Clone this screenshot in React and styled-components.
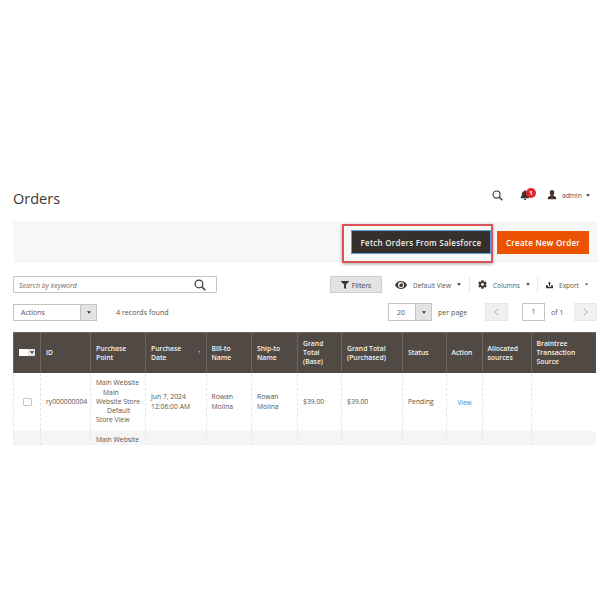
import React from "react";
import styled, { createGlobalStyle } from "styled-components";
import { FaCog, FaEye, FaBell, FaFilter } from "react-icons/fa";

const Global = createGlobalStyle`
  html, body {
    margin: 0;
    padding: 0;
    background: #fff;
    font-family: "Open Sans", sans-serif;
    color: #41362f;
  }
  * { box-sizing: border-box; }
`;

const columns = [
  { w: 27 },
  { w: 50, label: "ID" },
  { w: 55, label: "Purchase Point" },
  { w: 60.5, label: "Purchase Date", sort: true },
  { w: 45.5, label: "Bill-to Name" },
  { w: 46, label: "Ship-to Name" },
  { w: 44, label: "Grand Total (Base)" },
  { w: 61, label: "Grand Total (Purchased)" },
  { w: 43.5, label: "Status" },
  { w: 36, label: "Action" },
  { w: 49, label: "Allocated sources" },
  { w: 65.5, label: "Braintree Transaction Source" },
];

const Caret = () => (
  <svg width="4" height="3" viewBox="0 0 6 4">
    <path d="M0 0h6L3 4z" fill="#41362f" />
  </svg>
);

const SearchIcon = ({ size = 13 }) => (
  <svg width={size} height={size} viewBox="0 0 14 14" fill="none" stroke="#41362f">
    <circle cx="5.8" cy="5.8" r="4.5" strokeWidth="1.4" />
    <path d="M9.2 9.2l4 4" strokeWidth="1.800" />
  </svg>
);

const App = () => (
  <>
    <Global />
    <Page>
      <Header>
        <Title>Orders</Title>
        <HeaderTools>
          <SearchIcon size={11} />
          <Bell>
            <FaBell size={10} color="#41362f" />
            <Badge>1</Badge>
          </Bell>
          <AdminUser>
            <svg width="10" height="10" viewBox="0 0 12 12">
              <path d="M6 0c1.700 0 2.700 1.200 2.700 3S7.800 6 7.300 7c1.500.5 3.700 1.200 3.700 2.500V11H1V9.500C1 8.200 3.200 7.500 4.700 7 4.200 6 3.300 4.800 3.300 3S4.300 0 6 0z" fill="#41362f" />
            </svg>
            <span>admin</span>
            <Caret />
          </AdminUser>
        </HeaderTools>
      </Header>

      <ActionBar>
        <FetchWrap>
          <FetchButton>Fetch Orders From Salesforce</FetchButton>
        </FetchWrap>
        <CreateButton>Create New Order</CreateButton>
      </ActionBar>

      <ToolRow>
        <SearchBox>
          <em>Search by keyword</em>
          <SearchIcon size={12} />
        </SearchBox>
        <ToolGroup>
          <FilterButton>
            <FaFilter size={8} color="#41362f" />
            Filters
          </FilterButton>
          <ToolItem $w={74}>
            <FaEye size={12} color="#41362f" />
            <span>Default View</span>
            <Caret />
          </ToolItem>
          <ToolItem $w={68} $divided>
            <FaCog size={9} color="#41362f" />
            <span>Columns</span>
            <Caret />
          </ToolItem>
          <ToolItem $w={51} $divided>
            <svg width="9" height="8" viewBox="0 0 10 9">
              <path d="M5 0l2.500 2.500H5.800V6H4.200V2.500H2.500zM0 5h2.800v2h4.400V5H10v4H0z" fill="#41362f" />
            </svg>
            <span>Export</span>
            <Caret />
          </ToolItem>
        </ToolGroup>
      </ToolRow>

      <PagerRow>
        <LeftPager>
          <ActionsSelect>
            <span>Actions</span>
            <SelectArrow><Caret /></SelectArrow>
          </ActionsSelect>
          <Records>4 records found</Records>
        </LeftPager>
        <RightPager>
          <PerPageSelect>
            <span>20</span>
            <SelectArrow><Caret /></SelectArrow>
          </PerPageSelect>
          <PerPage>per page</PerPage>
          <PageArrow>
            <svg width="5" height="8" viewBox="0 0 6 9" fill="none" stroke="#adadad" strokeWidth="1.200">
              <path d="M5 .5L1 4.500l4 4" />
            </svg>
          </PageArrow>
          <PageInput>1</PageInput>
          <OfPages>of 1</OfPages>
          <PageArrow>
            <svg width="5" height="8" viewBox="0 0 6 9" fill="none" stroke="#adadad" strokeWidth="1.200">
              <path d="M1 .5l4 4-4 4" />
            </svg>
          </PageArrow>
        </RightPager>
      </PagerRow>

      <TableClip>
        <Table>
          <colgroup>
            {columns.map((c, i) => (
              <col key={i} style={{ width: c.w }} />
            ))}
          </colgroup>
          <thead>
            <tr>
              {columns.map((c, i) => (
                <Th key={i} $sort={c.sort}>
                  {i === 0 ? (
                    <HeadCheck>
                      <i />
                      <b><Caret /></b>
                    </HeadCheck>
                  ) : (
                    c.label
                  )}
                  {c.sort && <SortMark>↑</SortMark>}
                </Th>
              ))}
            </tr>
          </thead>
          <tbody>
            <FirstRow>
              <Td $center><CheckBox /></Td>
              <Td>ry000000004</Td>
              <Td>
                <StoreLine>Main Website</StoreLine>
                <StoreLine $indent={7}>Main</StoreLine>
                <StoreLine>Website Store</StoreLine>
                <StoreLine $indent={11}>Default</StoreLine>
                <StoreLine>Store View</StoreLine>
              </Td>
              <Td>Jun 7, 2024 12:06:00 AM</Td>
              <Td>Rowan Molina</Td>
              <Td>Rowan Molina</Td>
              <Td>$39.00</Td>
              <Td>$39.00</Td>
              <Td>Pending</Td>
              <Td $center><ViewLink>View</ViewLink></Td>
              <Td />
              <Td />
            </FirstRow>
            <OddRow>
              <Td />
              <Td />
              <Td><StoreLine>Main Website</StoreLine></Td>
              <Td />
              <Td />
              <Td />
              <Td />
              <Td />
              <Td />
              <Td />
              <Td />
              <Td />
            </OddRow>
          </tbody>
        </Table>
      </TableClip>
    </Page>
  </>
);

export default App;

const Page = styled.div`
  width: 600px;
  height: 600px;
  padding: 187px 3px 0 13px;
  overflow: hidden;
`;

const Header = styled.div`
  display: flex;
  justify-content: space-between;
  align-items: center;
  height: 24px;
  padding-right: 7px;
`;

const Title = styled.h1`
  margin: 0;
  font-size: 14.500px;
  font-weight: 400;
  line-height: 24px;
  color: #41362f;
`;

const HeaderTools = styled.div`
  display: flex;
  align-items: center;
  margin-top: -8px;
`;

const Bell = styled.div`
  position: relative;
  display: flex;
  margin-left: 17px;
  margin-right: 17px;
`;

const Badge = styled.span`
  position: absolute;
  top: -2px;
  left: 6px;
  width: 10px;
  height: 10px;
  border-radius: 50%;
  background: #e22626;
  color: #fff;
  font-size: 6px;
  font-weight: 700;
  line-height: 10px;
  text-align: center;
`;

const AdminUser = styled.div`
  display: flex;
  align-items: center;
  font-size: 6.800px;
  color: #5c534d;

  span {
    margin: 0 4px 0 5px;
  }
`;

const ActionBar = styled.div`
  display: flex;
  justify-content: flex-end;
  align-items: center;
  gap: 6px;
  height: 40px;
  margin-top: 11px;
  padding-right: 8px;
  background: #f8f8f8;
  border-top: 1px solid #f2f2f2;
  border-bottom: 1px solid #f2f2f2;
`;

const FetchWrap = styled.div`
  position: relative;

  &::after {
    content: "";
    position: absolute;
    top: -6px;
    right: -2px;
    bottom: -9px;
    left: -9px;
    border: 2px solid #d9535c;
    box-shadow: 0 1px 3px rgba(0, 0, 0, 0.35);
    pointer-events: none;
  }
`;

const FetchButton = styled.button`
  display: block;
  width: 140px;
  height: 24px;
  padding: 0;
  border: 1px solid #5d9fd6;
  background: #35302e;
  color: #f1ece8;
  font-family: inherit;
  font-size: 8px;
  font-weight: 600;
  letter-spacing: 0.25px;
`;

const CreateButton = styled.button`
  width: 92px;
  height: 23px;
  padding: 0;
  border: 0;
  background: #eb5202;
  color: #fff;
  font-family: inherit;
  font-size: 8px;
  font-weight: 600;
  letter-spacing: 0.25px;
`;

const ToolRow = styled.div`
  display: flex;
  justify-content: space-between;
  align-items: center;
  margin-top: 14px;
  height: 17px;
`;

const SearchBox = styled.div`
  display: flex;
  justify-content: space-between;
  align-items: center;
  width: 204px;
  height: 17px;
  padding: 1px 10px 0 5px;
  background: #fff;
  border: 1px solid #c4c4c4;
  border-radius: 1px;
  font-size: 7px;

  em {
    color: #6b6b6b;
  }
`;

const ToolGroup = styled.div`
  display: flex;
  align-items: center;
  padding-right: 9px;
`;

const FilterButton = styled.div`
  display: flex;
  align-items: center;
  justify-content: center;
  gap: 3px;
  width: 52px;
  height: 17px;
  margin-right: 13px;
  padding-top: 1px;
  background: #e3e3e3;
  border: 1px solid #cfcfcf;
  font-size: 6.500px;
  font-weight: 600;
  color: #6b625c;
`;

const ToolItem = styled.div`
  display: flex;
  align-items: center;
  gap: 6px;
  width: ${(p) => p.$w}px;
  height: 16px;
  font-size: 6.500px;
  color: #5c534d;
  ${(p) => p.$divided && `
    border-left: 1px solid #e8e8e8;
    padding-left: 8px;
  `}

  span {
    padding-top: 1px;
  }
`;

const PagerRow = styled.div`
  display: flex;
  justify-content: space-between;
  align-items: center;
  height: 18px;
  margin-top: 10px;
`;

const LeftPager = styled.div`
  display: flex;
  align-items: center;
  gap: 19px;
`;

const SelectBase = styled.div`
  display: flex;
  justify-content: space-between;
  align-items: center;
  height: 17px;
  background: #fff;
  border: 1px solid #c4c4c4;
  font-size: 7px;
  color: #5c534d;
`;

const ActionsSelect = styled(SelectBase)`
  width: 84px;
  padding-left: 7px;
`;

const PerPageSelect = styled(SelectBase)`
  width: 44px;
  height: 18px;
  padding-left: 8px;
`;

const SelectArrow = styled.div`
  display: flex;
  align-items: center;
  justify-content: center;
  width: 16px;
  height: 100%;
  background: #e3e3e3;
  border-left: 1px solid #c4c4c4;
`;

const Records = styled.span`
  font-size: 7.100px;
  color: #5c534d;
`;

const RightPager = styled.div`
  display: flex;
  align-items: center;
`;

const PerPage = styled.span`
  width: 30px;
  margin: 0 17px 0 6px;
  font-size: 7.100px;
  white-space: nowrap;
  color: #5c534d;
`;

const PageArrow = styled.div`
  display: flex;
  align-items: center;
  justify-content: center;
  width: 23px;
  height: 18px;
  background: #f0f0f0;
  border: 1px solid #e8e8e8;
`;

const PageInput = styled.div`
  width: 23px;
  height: 18px;
  margin-left: 14px;
  background: #fff;
  border: 1px solid #c4c4c4;
  font-size: 7px;
  line-height: 16px;
  text-align: center;
  color: #5c534d;
`;

const OfPages = styled.span`
  width: 12px;
  margin: 0 11px 0 6px;
  font-size: 7.100px;
  white-space: nowrap;
  color: #5c534d;
`;

const TableClip = styled.div`
  width: 583px;
  height: 113px;
  margin-top: 11px;
  overflow: hidden;
`;

const Table = styled.table`
  width: 583px;
  table-layout: fixed;
  border-collapse: collapse;
  font-size: 7px;
`;

const Th = styled.th`
  position: ${(p) => (p.$sort ? "relative" : "static")};
  height: 40px;
  padding: 0 ${(p) => (p.$sort ? "14px" : "4px")} 0 5px;
  background: #514943;
  border-left: 1px solid #6e655e;
  border-top: 1px solid #6e655e;
  color: #f5f2ef;
  font-size: 6.800px;
  font-weight: 600;
  line-height: 9.200px;
  text-align: left;
`;

const SortMark = styled.span`
  position: absolute;
  right: 5px;
  top: 15px;
  font-size: 5px;
`;

const HeadCheck = styled.div`
  display: flex;
  height: 7px;

  i {
    width: 9px;
    background: #fff;
  }

  b {
    display: flex;
    align-items: center;
    justify-content: center;
    width: 7px;
    background: #e3e3e3;
  }
`;

const Td = styled.td`
  padding: 0 4px 0 5px;
  border-left: 1px dashed #e6e6e6;
  border-right: 1px dashed #e6e6e6;
  color: #5c534d;
  font-size: 6.800px;
  line-height: 9.300px;
  text-align: ${(p) => (p.$center ? "center" : "left")};
  vertical-align: middle;
`;

const StoreLine = styled.div`
  margin-left: ${(p) => p.$indent || 0}px;
  white-space: nowrap;
`;

const FirstRow = styled.tr`
  td {
    height: 58px;
  }
`;

const OddRow = styled.tr`
  background: #f5f5f5;

  td {
    vertical-align: top;
    padding-top: 4px;
    height: 14px;
  }
`;

const CheckBox = styled.span`
  display: inline-block;
  width: 9px;
  height: 8px;
  background: #fff;
  border: 1px solid #c4c4c4;
  border-radius: 1px;
  vertical-align: middle;
`;

const ViewLink = styled.a`
  position: relative;
  top: 1px;
  color: #2f8fdc;
  font-size: 6.500px;
`;
